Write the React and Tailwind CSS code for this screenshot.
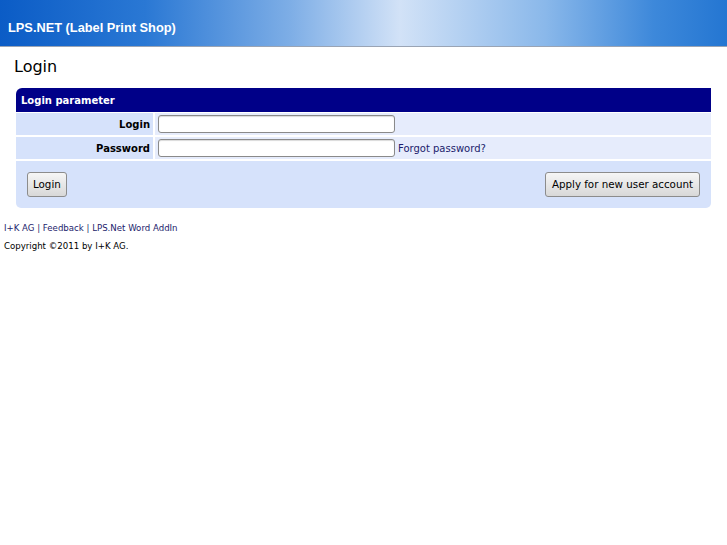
import React, { useState } from 'react';

const App = () => {
  const [login, setLogin] = useState('');
  const [password, setPassword] = useState('');

  return (
    <div className="min-h-[545px] bg-white" style={{ fontFamily: '"DejaVu Sans", Verdana, sans-serif' }}>
      {/* header bar */}
      <div className="h-[47px] border-b border-[#9aa4b4] bg-[linear-gradient(to_right,#0b5cc6_0%,#2a78d4_20%,#7eaee6_40%,#d2e2f7_55%,#8ab8ea_75%,#3d88da_90%,#2476d2_100%)] flex items-center px-[8px]">
        <span className="text-white font-bold text-[12.8px] pt-[10px]" style={{ fontFamily: '"Liberation Sans", Arial, sans-serif' }}>
          LPS.NET (Label Print Shop)
        </span>
      </div>

      <div className="px-[14px] pt-[10px]">
        <h1 className="text-[16px] text-black leading-[20px]">Login</h1>
      </div>

      {/* login table */}
      <div className="mx-[16px] mt-[11px]">
        <div className="h-[24px] bg-[#000088] rounded-tl-[6px] flex items-center px-[5px]">
          <span className="text-white font-bold text-[10px]">Login parameter</span>
        </div>
        <div className="flex mt-[1px] h-[22px]">
          <div className="w-[137px] bg-[#d6e2fb] flex items-center justify-end pr-[3px] text-[10px] font-bold text-black">
            Login
          </div>
          <div className="flex-1 ml-[2px] bg-[#e6ecfc] flex items-center pl-[3px]">
            <input
              type="text"
              value={login}
              onChange={(e) => setLogin(e.target.value)}
              className="w-[237px] h-[18px] bg-white border border-[#8a8a8a] rounded-[3px] shadow-[inset_0_1px_1px_rgba(0,0,0,0.15)] outline-none"
            />
          </div>
        </div>
        <div className="flex mt-[2px] h-[22px]">
          <div className="w-[137px] bg-[#d6e2fb] flex items-center justify-end pr-[3px] text-[10px] font-bold text-black">
            Password
          </div>
          <div className="flex-1 ml-[2px] bg-[#e6ecfc] flex items-center pl-[3px]">
            <input
              type="password"
              value={password}
              onChange={(e) => setPassword(e.target.value)}
              className="w-[237px] h-[18px] bg-white border border-[#8a8a8a] rounded-[3px] shadow-[inset_0_1px_1px_rgba(0,0,0,0.15)] outline-none"
            />
            <a href="#" className="ml-[3px] text-[10px] text-[#1c1c6c]">Forgot password?</a>
          </div>
        </div>
        <div className="mt-[2px] h-[47px] bg-[#d6e2fb] rounded-b-[5px] flex items-center justify-between px-[11px]">
          <button className="h-[25px] px-[5px] text-[10.3px] text-black border border-[#8c8c8c] rounded-[3px] bg-[linear-gradient(#f6f6f6,#d8d8d8)]">
            Login
          </button>
          <button className="h-[25px] px-[6px] text-[10.3px] text-black border border-[#8c8c8c] rounded-[3px] bg-[linear-gradient(#f6f6f6,#d8d8d8)]">
            Apply for new user account
          </button>
        </div>
      </div>

      {/* footer */}
      <div className="px-[4px] mt-[14px] text-[8.6px] leading-[12px]">
        <div className="text-[#1c1c6c]">
          <a href="#">I+K AG</a> | <a href="#">Feedback</a> | <a href="#">LPS.Net Word AddIn</a>
        </div>
        <div className="mt-[6px] text-black">Copyright ©2011 by I+K AG.</div>
      </div>
    </div>
  );
};

export default App;
